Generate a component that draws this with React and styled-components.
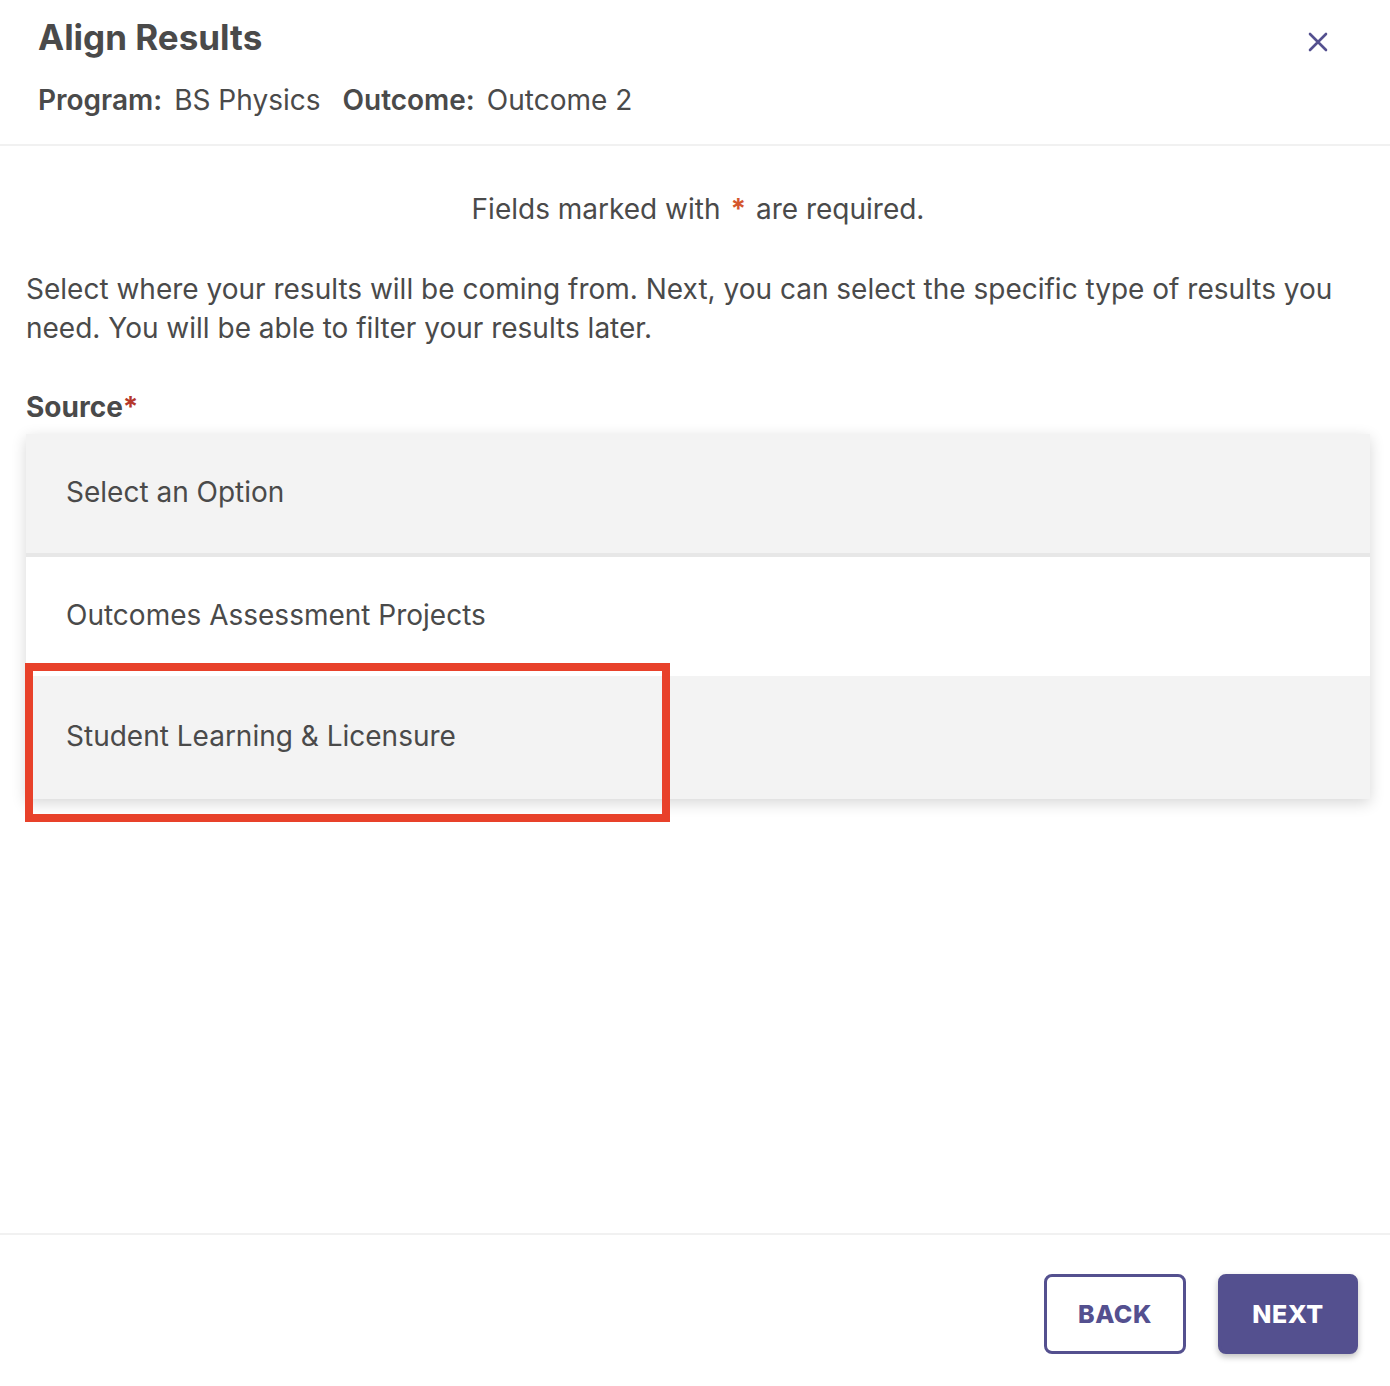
import React from 'react';
import styled, { createGlobalStyle } from 'styled-components';

const GlobalStyle = createGlobalStyle`
  html, body {
    margin: 0;
    padding: 0;
    background: #fff;
    font-family: Inter, "Noto Sans", sans-serif;
    color: #4a4a4a;
  }
`

const Modal = styled.div`
  width: 1390px;
  height: 1386px;
  display: flex;
  flex-direction: column;
  background: #fff;
`
const Header = styled.header`
  display: flex;
  justify-content: space-between;
  align-items: flex-start;
  padding: 14px 62px 0 38px;
  height: 130px;
  border-bottom: 2px solid #f1f1f1;
`
const Title = styled.h1`
  margin: 0;
  font-size: 35px;
  line-height: 46px;
  font-weight: 700;
  color: #4a4a4a;
`
const Meta = styled.div`
  margin-top: 22px;
  font-size: 28px;
  line-height: 36px;
  display: flex;
  gap: 22px;
`
const MetaItem = styled.span`
  b { font-weight: 600; margin-right: 12px; }
`
const CloseButton = styled.button`
  margin-top: 18px;
  background: none;
  border: none;
  padding: 0;
  cursor: pointer;
  display: flex;
`
const Body = styled.main`
  flex: 1;
  padding: 0 20px 0 26px;
  position: relative;
`
const Required = styled.p`
  margin: 44px 0 0;
  text-align: center;
  font-size: 28px;
  line-height: 38px;
`
const Star = styled.span`
  color: ${({ $dark }) => ($dark ? '#b5372a' : '#d4562e')};
  font-weight: 700;
  margin: ${({ $gap }) => ($gap ? '0 2px' : '0')};
`
const Description = styled.p`
  margin: 42px 0 0;
  font-size: 28px;
  line-height: 39px;
`
const Label = styled.div`
  margin-top: 42px;
  font-size: 28px;
  line-height: 34px;
  font-weight: 700;
`
const Menu = styled.ul`
  list-style: none;
  margin: 10px 0 0;
  padding: 0;
  box-shadow: 0 4px 14px rgba(0, 0, 0, 0.16);
`
const Option = styled.li`
  height: ${({ $h }) => $h}px;
  display: flex;
  align-items: center;
  padding-left: 40px;
  padding-bottom: 3px;
  box-sizing: border-box;
  font-size: 28px;
  background: ${({ $shade }) => ($shade ? '#f3f3f3' : '#fff')};
  border-bottom: ${({ $divider }) => ($divider ? '4px solid #e7e7e7' : 'none')};
`
const Highlight = styled.div`
  position: absolute;
  left: 25px;
  top: 517px;
  width: 629px;
  height: 143px;
  border: 8px solid #e8412a;
  pointer-events: none;
`
const Footer = styled.footer`
  height: 153px;
  border-top: 2px solid #f1f1f1;
  display: flex;
  justify-content: flex-end;
  align-items: flex-start;
  gap: 32px;
  padding: 39px 32px 0 0;
  box-sizing: border-box;
`
const Button = styled.button`
  width: ${({ $w }) => $w}px;
  height: 80px;
  border-radius: 8px;
  border: 3px solid #54508f;
  background: ${({ $primary }) => ($primary ? '#54508f' : '#fff')};
  color: ${({ $primary }) => ($primary ? '#fff' : '#54508f')};
  font-family: Inter, sans-serif;
  font-weight: 800;
  font-size: 25px;
  letter-spacing: 0.5px;
  box-shadow: ${({ $primary }) => ($primary ? '0 3px 6px rgba(0,0,0,0.25)' : 'none')};
  cursor: pointer;
`

const OPTIONS = [
  { label: 'Select an Option', shade: true, divider: true, h: 123 },
  { label: 'Outcomes Assessment Projects', shade: false, h: 119 },
  { label: 'Student Learning & Licensure', shade: true, h: 123 },
]

const App = () => (
  <>
    <GlobalStyle />
    <Modal>
      <Header>
        <div>
          <Title>Align Results</Title>
          <Meta>
            <MetaItem><b>Program:</b>BS Physics</MetaItem>
            <MetaItem><b>Outcome:</b>Outcome 2</MetaItem>
          </Meta>
        </div>
        <CloseButton aria-label="close">
          <svg width="20" height="20" viewBox="0 0 20 20">
            <path d="M2 2 L18 18 M18 2 L2 18" stroke="#54508f" strokeWidth="2.6" strokeLinecap="round" />
          </svg>
        </CloseButton>
      </Header>
      <Body>
        <Required>Fields marked with <Star $gap>*</Star> are required.</Required>
        <Description>
          Select where your results will be coming from. Next, you can select the specific type of results you need. You will be able to filter your results later.
        </Description>
        <Label>Source<Star $dark>*</Star></Label>
        <Menu>
          {OPTIONS.map(o => (
            <Option key={o.label} $shade={o.shade} $divider={o.divider} $h={o.h}>{o.label}</Option>
          ))}
        </Menu>
        <Highlight />
      </Body>
      <Footer>
        <Button $w={142}>BACK</Button>
        <Button $w={140} $primary>NEXT</Button>
      </Footer>
    </Modal>
  </>
)

export default App
